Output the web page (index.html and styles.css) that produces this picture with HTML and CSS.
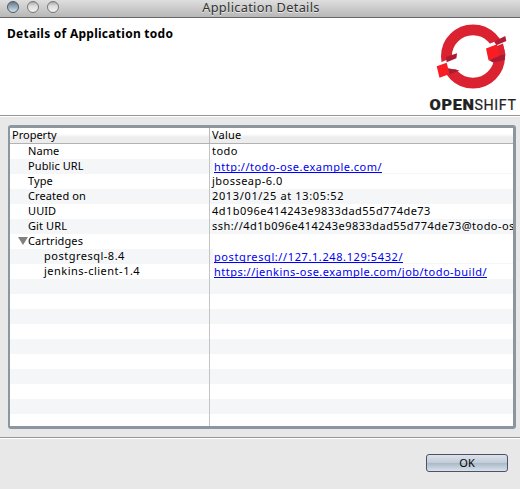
FILE: index.html
```html
<!DOCTYPE html>
<html lang="en">
<head>
<meta charset="utf-8">
<title>Application Details</title>
<link rel="stylesheet" href="styles.css">
</head>
<body>
<div class="window">
  <div class="titlebar">
    <div class="lights"><i class="light active"></i><i class="light"></i><i class="light"></i></div>
    <span class="title">Application Details</span>
  </div>
  <header class="banner">
    <h1>Details of Application todo</h1>
    <svg class="logo" width="93" height="97" viewBox="427 18 93 97">
      <circle cx="473" cy="56.500" r="26.600" fill="none" stroke="#da2230" stroke-width="10.800"/>
      <path fill="#fff" d="M438 63.500L446.500 60L458 56L458 69.500L447 69L438 80Z"/>
      <path fill="#fff" d="M483 46.500L495 41.500L508 37V42L497.500 47L499 55L488 60Z"/>
      <path fill="#b01c33" d="M494 41.500L505.300 36L506.300 41L496.500 45.300Z"/>
      <path fill="#da2230" d="M497 46L503 43.500L505.500 55L498 57Z"/>
      <path fill="#a81b33" d="M488.500 60L499 55.500L505.300 54.700L504.700 60L493 62.500Z"/>
      <path fill="#f91d23" d="M486 48.500L497 44.300L499.300 56L488.500 60.300Z"/>
      <path fill="#a81b33" d="M446 57L457 53.300L456.400 58.300L446.700 62.300Z"/>
      <path fill="#a81b33" d="M447 68L459.500 70.500L449.500 74.500Z"/>
      <path fill="#f91d23" d="M436.700 66.300L446.700 62.700L449.500 74L439.500 77.700Z"/>
      <text x="429.500" y="109.500" textLength="45" lengthAdjust="spacingAndGlyphs" class="brand heavy">OPEN</text>
      <text x="474.500" y="109.500" textLength="42" lengthAdjust="spacingAndGlyphs" class="brand">SHIFT</text>
    </svg>
  </header>
  <main class="content">
    <div class="table">
      <div class="row head"><div class="key">Property</div><div class="val">Value</div></div>
      <div class="rows">
        <div class="row"><div class="key">Name</div><div class="val">todo</div></div>
        <div class="row"><div class="key">Public URL</div><div class="val link"><a class="web">http://todo-ose.example.com/</a></div></div>
        <div class="row"><div class="key">Type</div><div class="val">jbosseap-6.0</div></div>
        <div class="row"><div class="key">Created on</div><div class="val date">2013/01/25 at 13:05:52</div></div>
        <div class="row"><div class="key">UUID</div><div class="val">4d1b096e414243e9833dad55d774de73</div></div>
        <div class="row"><div class="key">Git URL</div><div class="val git">ssh://4d1b096e414243e9833dad55d774de73@todo-os</div></div>
        <div class="row"><div class="key parent">Cartridges</div><div class="val"></div></div>
        <div class="row"><div class="key child">postgresql-8.4</div><div class="val link"><a class="db">postgresql://127.1.248.129:5432/</a></div></div>
        <div class="row"><div class="key child">jenkins-client-1.4</div><div class="val link"><a class="web">https://jenkins-ose.example.com/job/todo-build/</a></div></div>
        <div class="row"><div class="key"></div><div class="val"></div></div>
      </div>
    </div>
  </main>
  <footer class="actions"><button class="ok">OK</button></footer>
</div>
</body>
</html>
```
FILE: styles.css
```css
* { box-sizing: border-box; }
body { margin: 0; overflow: hidden; font: 11px/13px "Noto Sans", "Open Sans", sans-serif; color: #000; }
.window { width: 520px; height: 489px; background: #e8e8e8; display: flex; flex-direction: column; }
.titlebar { height: 18px; position: relative; background: linear-gradient(#dedede, #b7b7b7); border-bottom: 1px solid #686868; text-align: center; }
.title { display: block; font-size: 12.8px; line-height: 15px; letter-spacing: .3px; color: #333; padding-left: 2px; text-shadow: 0 1px 0 #e8e8e8; }
.lights { position: absolute; left: 7px; top: 1px; display: flex; gap: 8px; }
.light { width: 12px; height: 12px; border-radius: 50%; border: 1px solid #777; background: linear-gradient(#aaa, #ddd 40%, #f2f2f2); }
.light.active { border-color: #4d5964; background: linear-gradient(#66798a, #91a4b5 40%, #d4e4ee); }
.banner { height: 98px; background: #fff; border-bottom: 1px solid #969696; display: flex; justify-content: space-between; }
h1 { margin: 8px 0 0 7px; font-size: 12px; line-height: 16px; font-weight: 700; letter-spacing: .27px; }
.logo { flex: none; }
.brand { font: 400 14.5px Roboto, sans-serif; letter-spacing: .6px; fill: #222; stroke: #222; stroke-width: .2px; }
.heavy { font-weight: 900; }
.content { height: 321px; padding: 8px 4px 0 8px; border-top: 1px solid #fff; }
.table { width: 508px; height: 304px; border: 3px solid #8c969f; border-left-width: 2px; border-radius: 3px; background: #fff; overflow: hidden; }
.row { display: flex; height: 15px; }
.row.head { height: 16px; line-height: 14px; background: linear-gradient(#fff 0 40%, #ededed 60%); border-bottom: 1px solid #b2b2b2; }
.rows { height: 282px; background: repeating-linear-gradient(#fff 0 15px, #f4f6f8 15px 30px); position: relative; }
.rows::after { content: ""; position: absolute; left: 199px; top: 0; bottom: 0; width: 1px; background: #c4c4c4; }
.key { width: 200px; padding-left: 18px; flex: none; white-space: nowrap; letter-spacing: .1px; }
.head .key { padding-left: 2px; border-right: 1px solid #bbb; letter-spacing: 0; }
.key.child { padding-left: 34px; letter-spacing: .5px; }
.parent { display: flex; }
.parent::before { content: ""; margin: 3px 0 0 -10px; border: 5px solid transparent; border-top: 8px solid #808080; border-bottom: 0; height: 0; }
.val { padding-left: 2px; flex: 1; min-width: 0; white-space: nowrap; overflow: hidden; letter-spacing: .47px; }
.head .val { letter-spacing: .2px; }
.date { letter-spacing: .64px; }
.git { letter-spacing: .46px; }
.link { background: #fff; margin-left: 3px; padding-left: 1px; height: 14px; line-height: 15px; }
.link a { color: #00e; display: block; width: max-content; border-bottom: 1px solid #00f; height: 14px; }
.web { letter-spacing: .48px; }
.db { letter-spacing: .6px; }
.actions { height: 52px; border-top: 1px solid #969696; box-shadow: inset 0 1px #fff; padding: 16px 12px 0 0; display: flex; justify-content: flex-end; align-items: flex-start; }
.ok { width: 82px; height: 18px; padding: 0 0 1px; border: 1px solid #50506e; border-radius: 3px; background: linear-gradient(#dde2e8, #c1ccd8 49%, #a9b8c8 50%, #d7e2ea); font: 11px/14px "Noto Sans", sans-serif; color: #000; }
```
